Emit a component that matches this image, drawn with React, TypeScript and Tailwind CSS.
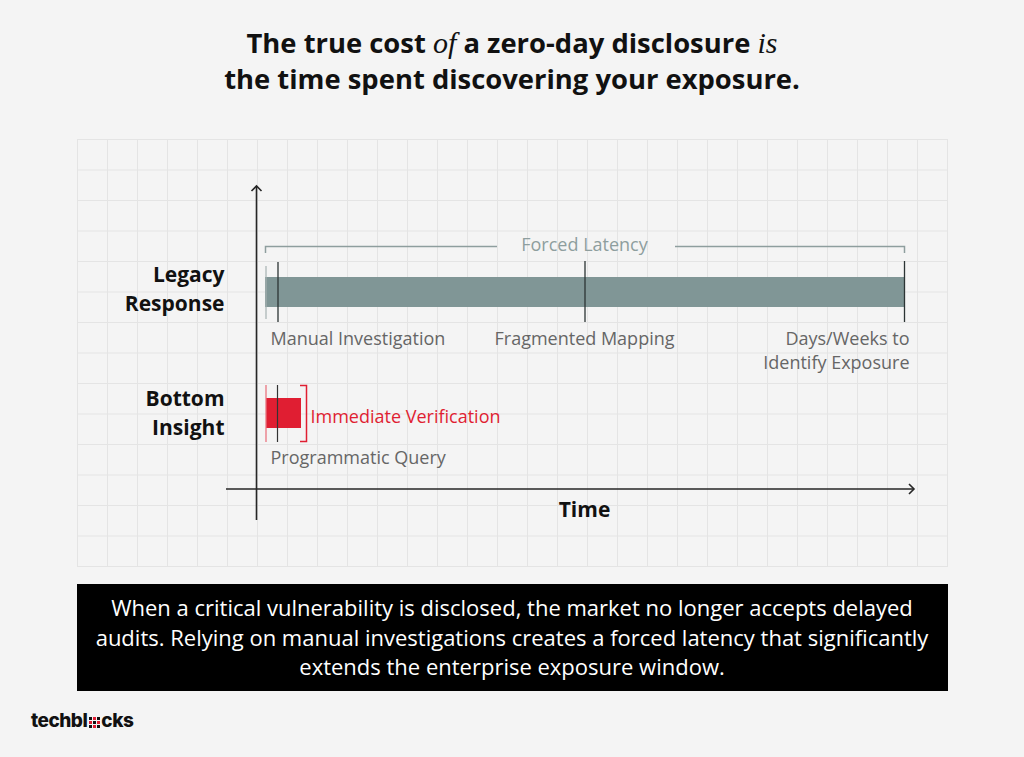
import React from "react";

function Logo() {
  const cells = [
    "bg-[#111]", "bg-[#e01e32]", "bg-[#111]",
    "bg-[#e01e32]", "bg-[#111]", "bg-[#e01e32]",
    "bg-[#111]", "bg-[#e01e32]", "bg-[#111]",
  ];
  return (
    <div className="flex items-center font-['Inter',sans-serif] font-extrabold text-[19px] leading-none tracking-[-0.5px] text-[#111]">
      <span>techbl</span>
      <span className="grid grid-cols-3 gap-[1px] mx-[1.5px] mt-[3px]">
        {cells.map((c, i) => (
          <span key={i} className={`block w-[3px] h-[3px] ${c}`} />
        ))}
      </span>
      <span>cks</span>
    </div>
  );
}

function ChartDrawing() {
  const axis = "#262626";
  return (
    <svg className="absolute inset-0" width="871" height="428" viewBox="0 0 871 428">
      <path d="M188.5 114 V107.5 H420" fill="none" stroke="#8e9e9e" strokeWidth="1.5" />
      <path d="M598 107.5 H827.5 V114" fill="none" stroke="#8e9e9e" strokeWidth="1.5" />
      <rect x="188" y="138" width="640" height="30" fill="#809696" />
      <line x1="189" y1="127" x2="189" y2="180" stroke="#a5b1b1" strokeWidth="1.2" />
      <line x1="201" y1="123" x2="201" y2="183" stroke="#2b3434" strokeWidth="1.3" />
      <line x1="508" y1="122" x2="508" y2="183" stroke="#2b3434" strokeWidth="1.3" />
      <line x1="827.5" y1="122" x2="827.5" y2="183" stroke="#2b3434" strokeWidth="1.3" />
      <rect x="189" y="259" width="35" height="30" fill="#e01e32" />
      <line x1="189" y1="246" x2="189" y2="303" stroke="#ea7580" strokeWidth="1.3" />
      <line x1="200.5" y1="246" x2="200.5" y2="303" stroke="#333" strokeWidth="1.2" />
      <path d="M223 246.5 H229.5 V302.5 H223" fill="none" stroke="#e01e32" strokeWidth="1.5" />
      <line x1="179.5" y1="47" x2="179.5" y2="381" stroke={axis} strokeWidth="1.6" />
      <polyline points="174.5,52 179.5,47 184.5,52" fill="none" stroke={axis} strokeWidth="1.6" />
      <line x1="149" y1="350" x2="837" y2="350" stroke={axis} strokeWidth="1.6" />
      <polyline points="832,345 837,350 832,355" fill="none" stroke={axis} strokeWidth="1.6" />
    </svg>
  );
}

function Row({ label, children, className = "" }: { label?: React.ReactNode; children?: React.ReactNode; className?: string }) {
  return (
    <div className={`flex gap-[40px] ${className}`}>
      <div className="w-[148px] shrink-0 text-right font-bold text-[21px] leading-[29px] text-[#111]">{label}</div>
      <div className="w-[640px] shrink-0">{children}</div>
    </div>
  );
}

function Chart() {
  return (
    <div className="relative mx-auto w-[871px] h-[428px] bg-[linear-gradient(to_right,#e4e4e4_1px,transparent_1px),linear-gradient(to_bottom,#e4e4e4_1px,transparent_1px)] bg-[size:30px_30.5px]">
      <ChartDrawing />
      <div className="relative flex flex-col pt-[93px] text-[18px] leading-[24px] text-[#666]">
        <Row>
          <div className="text-center text-[#8e9e9e]">Forced Latency</div>
        </Row>
        <Row className="mt-[4px]" label={<>Legacy<br />Response</>} />
        <Row className="mt-[8px]">
          <div className="-mx-[5px] grid grid-cols-[1fr_auto_1fr] whitespace-nowrap">
            <div className="pl-[11px]">Manual Investigation</div>
            <div>Fragmented Mapping</div>
            <div className="text-right">Days/Weeks to<br />Identify Exposure</div>
          </div>
        </Row>
        <Row className="mt-[10px]" label={<>Bottom<br />Insight</>}>
          <div className="flex h-full items-center pl-[46px] pt-[5px] text-[#e01e32]">Immediate Verification</div>
        </Row>
        <Row className="mt-[3px]">
          <div className="pl-[6px]">Programmatic Query</div>
        </Row>
        <Row className="mt-[26px]">
          <div className="text-center font-bold text-[21px] leading-[28px] text-[#111]">Time</div>
        </Row>
      </div>
    </div>
  );
}

export default function App() {
  return (
    <div className="w-[1024px] h-[757px] bg-[#f4f4f4] overflow-hidden flex flex-col font-['Open_Sans',sans-serif]">
      <h1 className="h-[139px] pt-[25px] text-center font-bold text-[27.4px] leading-[36px] text-[#111]">
        The true cost{" "}
        <span className="italic font-normal font-['Liberation_Serif',serif] text-[30px] leading-none">of</span>{" "}
        a zero-day disclosure{" "}
        <span className="italic font-normal font-['Liberation_Serif',serif] text-[30px] leading-none">is</span>
        <br />
        the time spent discovering your exposure.
      </h1>
      <Chart />
      <div className="mx-auto mt-[17px] w-[871px] h-[107px] bg-black flex items-center justify-center">
        <p className="text-center text-white text-[22px] leading-[29.5px]">
          When a critical vulnerability is disclosed, the market no longer accepts delayed<br />
          audits. Relying on manual investigations creates a forced latency that significantly<br />
          extends the enterprise exposure window.
        </p>
      </div>
      <div className="mt-[20px] ml-[31px]">
        <Logo />
      </div>
    </div>
  );
}
